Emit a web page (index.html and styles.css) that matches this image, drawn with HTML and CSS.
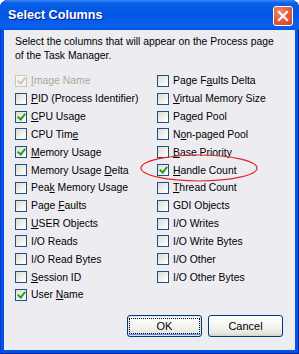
FILE: index.html
```html
<!DOCTYPE html>
<html lang="en">
<head>
  <meta charset="UTF-8" />
  <title>Select Columns</title>
  <link rel="stylesheet" href="styles.css">
</head>
<body>
  <div class="window">
    <div class="titlebar">
      <span class="title">Select Columns</span>
      <span class="close">
        <svg width="12" height="12" viewBox="0 0 12 12"><path d="M2 2 L10 10 M10 2 L2 10" stroke="#fff" stroke-width="2.2" stroke-linecap="square"/></svg>
      </span>
    </div>

    <div class="content">
      <p class="intro">Select the columns that will appear on the Process page of the Task Manager.</p>

      <div class="columns">
        <div class="col">
          <label class="item disabled"><span class="box checked"></span><span><u>I</u>mage Name</span></label>
          <label class="item"><span class="box"></span><span><u>P</u>ID (Process Identifier)</span></label>
          <label class="item"><span class="box checked"></span><span><u>C</u>PU Usage</span></label>
          <label class="item"><span class="box"></span><span>CPU Tim<u>e</u></span></label>
          <label class="item"><span class="box checked"></span><span><u>M</u>emory Usage</span></label>
          <label class="item"><span class="box"></span><span>Memory Usage <u>D</u>elta</span></label>
          <label class="item"><span class="box"></span><span>Pea<u>k</u> Memory Usage</span></label>
          <label class="item"><span class="box"></span><span>Page <u>F</u>aults</span></label>
          <label class="item"><span class="box"></span><span><u>U</u>SER Objects</span></label>
          <label class="item"><span class="box"></span><span>I/O Reads</span></label>
          <label class="item"><span class="box"></span><span>I/O Read Bytes</span></label>
          <label class="item"><span class="box"></span><span><u>S</u>ession ID</span></label>
          <label class="item"><span class="box checked"></span><span>User <u>N</u>ame</span></label>
        </div>
        <div class="col">
          <label class="item"><span class="box"></span><span>Page F<u>a</u>ults Delta</span></label>
          <label class="item"><span class="box"></span><span><u>V</u>irtual Memory Size</span></label>
          <label class="item"><span class="box"></span><span>Pa<u>g</u>ed Pool</span></label>
          <label class="item"><span class="box"></span><span>N<u>o</u>n-paged Pool</span></label>
          <label class="item"><span class="box"></span><span><u>B</u>ase Priority</span></label>
          <label class="item"><span class="box checked"></span><span><u>H</u>andle Count</span></label>
          <label class="item"><span class="box"></span><span><u>T</u>hread Count</span></label>
          <label class="item"><span class="box"></span><span>GDI Ob<u>j</u>ects</span></label>
          <label class="item"><span class="box"></span><span>I/O Writes</span></label>
          <label class="item"><span class="box"></span><span>I/O Write Bytes</span></label>
          <label class="item"><span class="box"></span><span>I/O Other</span></label>
          <label class="item"><span class="box"></span><span>I/O Other Bytes</span></label>
        </div>
      </div>

      <div class="buttons">
        <button class="btn default"><span>OK</span></button>
        <button class="btn">Cancel</button>
      </div>
    </div>

    <!-- hand-drawn highlight around Handle Count -->
    <svg class="mark" width="299" height="354" viewBox="0 0 299 354">
      <ellipse cx="199" cy="168" rx="58" ry="13" fill="none" stroke="#e0282c" stroke-width="1.2"/>
    </svg>
  </div>
</body>
</html>
```

FILE: styles.css
```css
html, body {
  margin: 0;
  padding: 0;
  background: #fff;
}
.window {
  position: relative;
  width: 299px;
  height: 354px;
  box-sizing: border-box;
  display: flex;
  flex-direction: column;
  background: #0055e5;
  border-radius: 8px 8px 0 0;
  padding: 0 4px 4px 4px;
  box-shadow: inset 1px 0 0 #0831d9, inset -1px 0 0 #001ea0, inset 0 -1px 0 #001ea0;
  font-family: "Liberation Sans", Arial, sans-serif;
}
.titlebar {
  height: 30px;
  margin: 0 -4px;
  padding: 0 6px 0 8px;
  display: flex;
  align-items: center;
  justify-content: space-between;
  border-radius: 8px 8px 0 0;
  background: linear-gradient(to bottom, #3c8cf8 0%, #0a5fe6 10%, #0055e5 45%, #0a60ec 85%, #0058e6 100%);
}
.title {
  color: #fff;
  font-weight: bold;
  font-size: 12.6px;
  text-shadow: 1px 1px 0 #0f1e8a;
}
.close {
  width: 20px;
  height: 20px;
  box-sizing: border-box;
  border: 1px solid #fff;
  border-radius: 3px;
  background: radial-gradient(circle at 35% 30%, #f28a6a 0%, #e2593b 55%, #c8401f 100%);
  display: flex;
  align-items: center;
  justify-content: center;
  margin-top: 1px;
}
.content {
  flex: 1;
  background: #ededf1;
  padding: 5px 11px 0 11px;
  display: flex;
  flex-direction: column;
  font-size: 10.4px;
  color: #000;
}
.intro {
  margin: 0;
  line-height: 14px;
}
.columns {
  display: grid;
  grid-template-columns: 142px 1fr;
  margin-top: 9px;
}
.item {
  display: flex;
  align-items: center;
  height: 17.83px;
  white-space: nowrap;
}
.box {
  width: 12px;
  height: 12px;
  box-sizing: border-box;
  border: 1px solid #1c5180;
  background: linear-gradient(135deg, #dcdcd6 0%, #f2f2ee 60%, #fff 100%);
  margin-right: 4px;
  position: relative;
  flex: none;
}
.box.checked::after {
  content: "";
  position: absolute;
  left: 3px;
  top: 0px;
  width: 3px;
  height: 6px;
  border: solid #21a121;
  border-width: 0 2px 2px 0;
  transform: rotate(40deg);
}
.disabled {
  color: #aca899;
}
.disabled .box {
  border-color: #cac8bb;
  background: #f4f4f4;
}
.disabled .box.checked::after {
  border-color: #cac8bb;
}
.buttons {
  display: flex;
  justify-content: flex-end;
  gap: 6px;
  margin-top: auto;
  margin-bottom: 13px;
  padding-right: 1px;
}
.btn {
  width: 75px;
  height: 22px;
  padding: 0;
  border: 1px solid #003c74;
  border-radius: 3px;
  background: linear-gradient(to bottom, #fff 0%, #f4f4f0 50%, #e8e8e2 85%, #d6d0c5 100%);
  font-family: inherit;
  font-size: 11px;
  color: #000;
}
.btn.default {
  box-shadow: inset 0 0 0 1px #cee7ff, inset 0 -1px 0 1px #6982ee;
}
.btn.default span {
  display: block;
  margin: 2px;
  height: 14px;
  line-height: 14px;
  outline: 1px dotted #000;
  outline-offset: 0;
}
.mark {
  position: absolute;
  left: 0;
  top: 0;
  pointer-events: none;
}
```
